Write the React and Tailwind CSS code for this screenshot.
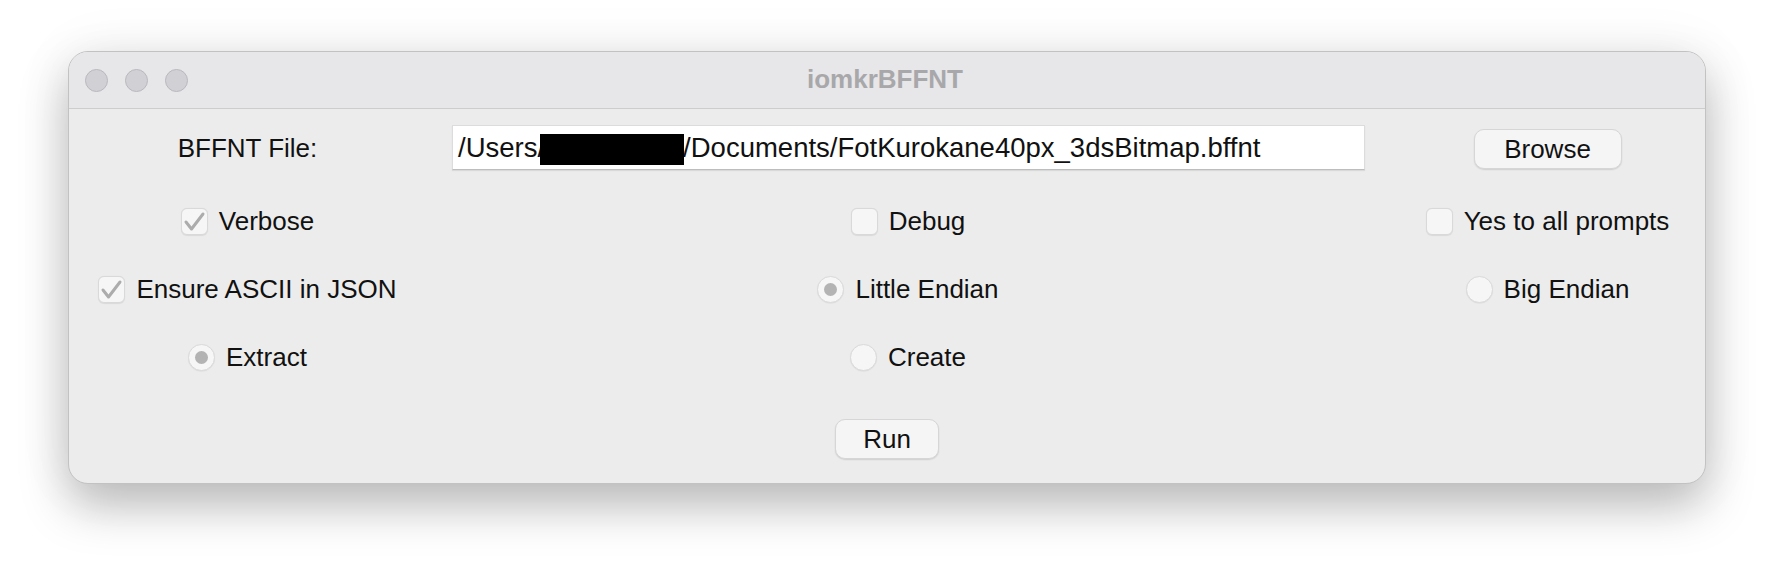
import React from "react";

function CheckBox({ checked }) {
  return (
    <span className="w-[27px] h-[27px] rounded-[6px] border border-[#d9d9d9] bg-[#f6f6f6] shadow-[0_0.5px_1px_rgba(0,0,0,0.08)] flex items-center justify-center">
      {checked && (
        <svg width="25" height="25" viewBox="0 0 25 25" fill="none">
          <path
            d="M4 13 L9.5 20 L21 5"
            stroke="#acacac"
            strokeWidth="3"
            strokeLinecap="round"
            strokeLinejoin="round"
          />
        </svg>
      )}
    </span>
  );
}

function Radio({ checked }) {
  return (
    <span className="w-[27px] h-[27px] rounded-full border border-[#dadada] bg-[#f6f6f6] shadow-[0_0.5px_1px_rgba(0,0,0,0.08)] flex items-center justify-center">
      {checked && <span className="w-[13px] h-[13px] rounded-full bg-[#b3b3b3]" />}
    </span>
  );
}

function Option({ kind, checked, label }) {
  return (
    <label className="flex items-center gap-[11px]">
      {kind === "check" ? <CheckBox checked={checked} /> : <Radio checked={checked} />}
      <span>{label}</span>
    </label>
  );
}

function MacButton({ children, width }) {
  return (
    <button
      className={`${width} h-[40px] rounded-[10px] bg-[#f5f5f5] border border-[#d6d6d6] shadow-[0_1px_1.5px_rgba(0,0,0,0.12)] text-[26px] leading-none text-[#111]`}
    >
      {children}
    </button>
  );
}

export default function App() {
  return (
    <div className="w-full h-[568px] bg-white pt-[51px] pl-[68px] font-['Liberation_Sans',Arial,sans-serif] text-[26px] text-[#111]">
      <div className="w-[1638px] h-[433px] rounded-[20px] border border-[#c2c2c2] bg-[#ececec] overflow-hidden shadow-[0_22px_48px_rgba(0,0,0,0.26),0_0_60px_rgba(0,0,0,0.06)] flex flex-col">
        {/* title bar */}
        <div className="h-[57px] shrink-0 bg-[#e7e6e9] border-b border-[#cdcdcd] grid grid-cols-3 items-center">
          <div className="flex items-center gap-[17px] pl-[16px]">
            <span className="w-[23px] h-[23px] rounded-full bg-[#d1d0d5] border border-[#b9b8bd]" />
            <span className="w-[23px] h-[23px] rounded-full bg-[#d1d0d5] border border-[#b9b8bd]" />
            <span className="w-[23px] h-[23px] rounded-full bg-[#d1d0d5] border border-[#b9b8bd]" />
          </div>
          <div className="text-center font-bold text-[26px] text-[#a8a8aa] -ml-[4px] -mt-[2px]">iomkrBFFNT</div>
          <div />
        </div>

        {/* body */}
        <div className="flex flex-col">
          <div className="grid grid-cols-[357px_964px_315px] grid-rows-[77px_71px_65px_71px] items-center justify-items-center">
            <span className="pt-[2px]">BFFNT File:</span>
            <div className="w-[913px] h-[45px] ml-[1px] bg-white border border-[#dcdcdc] border-b-[#bdbdbd] shadow-[0_1px_1px_rgba(0,0,0,0.08)] flex items-center pl-[5px] text-[27.5px] whitespace-nowrap overflow-hidden">
              <span>/Users/</span>
              <span className="relative inline-block w-[144px] h-[31px] bg-black -ml-[5px] -mr-[1px] mt-[4px]" />
              <span>/Documents/FotKurokane40px_3dsBitmap.bffnt</span>
            </div>
            <div className="pt-[3px]">
              <MacButton width="w-[148px]">Browse</MacButton>
            </div>

            <Option kind="check" checked label="Verbose" />
            <Option kind="check" label="Debug" />
            <Option kind="check" label="Yes to all prompts" />

            <Option kind="check" checked label="Ensure ASCII in JSON" />
            <Option kind="radio" checked label="Little Endian" />
            <Option kind="radio" label="Big Endian" />

            <Option kind="radio" checked label="Extract" />
            <Option kind="radio" label="Create" />
            <div />
          </div>

          <div className="flex justify-center pt-[26px]">
            <MacButton width="w-[104px]">Run</MacButton>
          </div>
        </div>
      </div>
    </div>
  );
}
